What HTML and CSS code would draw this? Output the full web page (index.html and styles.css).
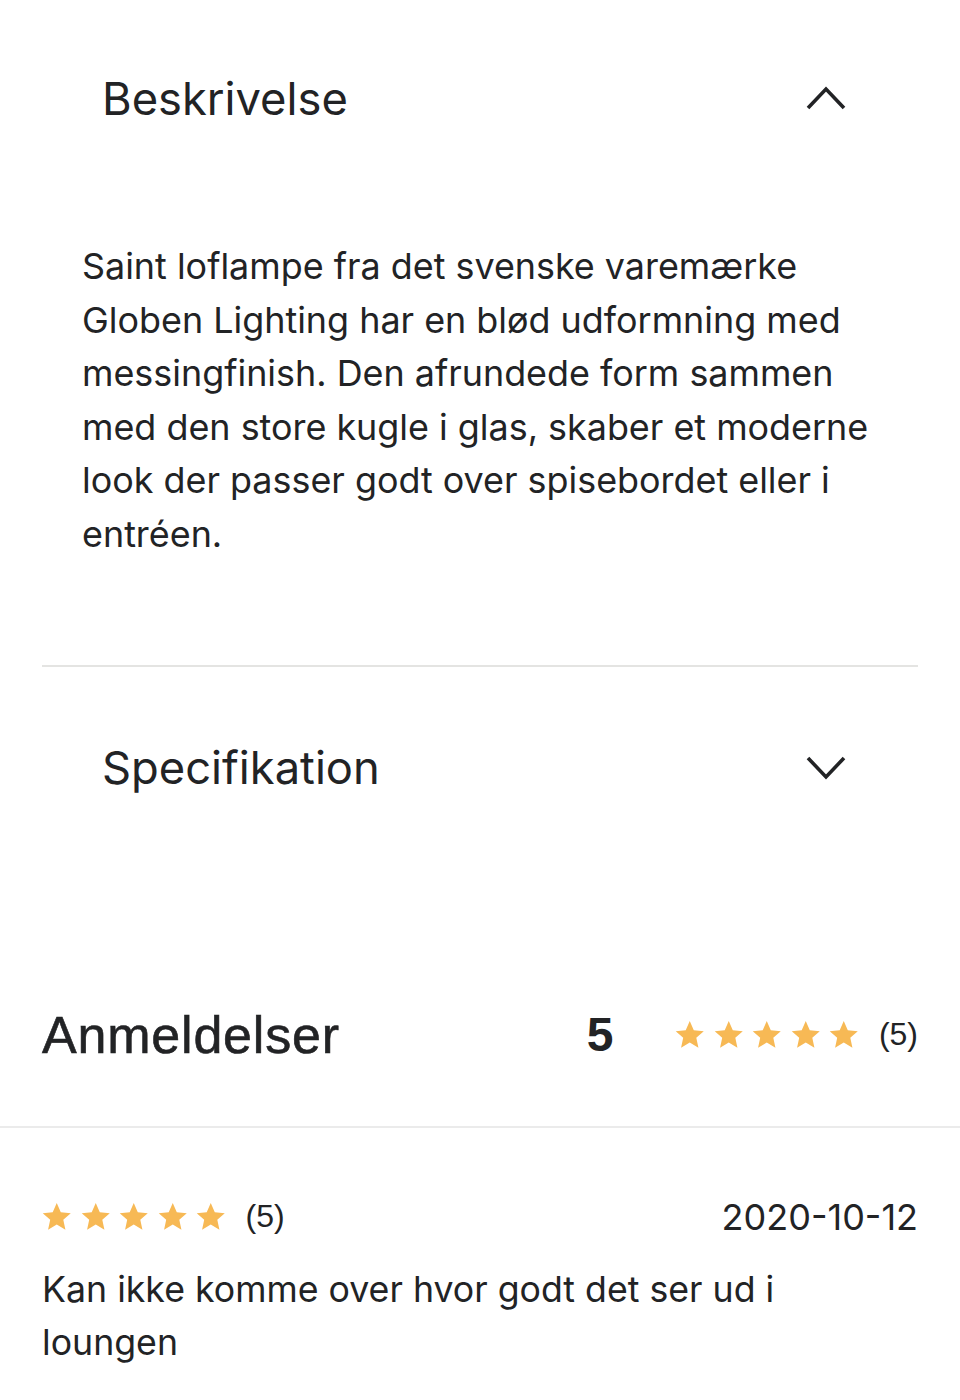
FILE: index.html
```html
<!DOCTYPE html>
<html lang="da">
<head>
<meta charset="utf-8">
<title>Produkt</title>
<link rel="stylesheet" href="styles.css">
</head>
<body>
<div class="page">
  <section class="accordion">
    <div class="acc-item acc-first">
      <div class="acc-header">
        <h2 class="acc-title">Beskrivelse</h2>
        <svg class="chevron" viewBox="0 0 40 24" aria-hidden="true"><polyline points="2,22 20,3 38,22" /></svg>
      </div>
      <p class="acc-body">Saint loflampe fra det svenske varemærke Globen Lighting har en blød udformning med messingfinish. Den afrundede form sammen med den store kugle i glas, skaber et moderne look der passer godt over spisebordet eller i entréen.</p>
    </div>
    <div class="acc-item acc-next">
      <div class="acc-header">
        <h2 class="acc-title">Specifikation</h2>
        <svg class="chevron" viewBox="0 0 40 24" aria-hidden="true"><polyline points="2,2 20,21 38,2" /></svg>
      </div>
    </div>
  </section>

  <section class="reviews">
    <div class="reviews-head">
      <h2 class="reviews-title">Anmeldelser</h2>
      <div class="reviews-score">
        <span class="score">5</span>
        <span class="stars">
          <svg class="star" viewBox="0 0 24 24"><path d="M12 0.8L15.29 8.27L23.41 9.09L17.33 14.53L19.05 22.51L12 18.4L4.95 22.51L6.67 14.53L0.59 9.09L8.71 8.27Z"/></svg>
          <svg class="star" viewBox="0 0 24 24"><path d="M12 0.8L15.29 8.27L23.41 9.09L17.33 14.53L19.05 22.51L12 18.4L4.95 22.51L6.67 14.53L0.59 9.09L8.71 8.27Z"/></svg>
          <svg class="star" viewBox="0 0 24 24"><path d="M12 0.8L15.29 8.27L23.41 9.09L17.33 14.53L19.05 22.51L12 18.4L4.95 22.51L6.67 14.53L0.59 9.09L8.71 8.27Z"/></svg>
          <svg class="star" viewBox="0 0 24 24"><path d="M12 0.8L15.29 8.27L23.41 9.09L17.33 14.53L19.05 22.51L12 18.4L4.95 22.51L6.67 14.53L0.59 9.09L8.71 8.27Z"/></svg>
          <svg class="star" viewBox="0 0 24 24"><path d="M12 0.8L15.29 8.27L23.41 9.09L17.33 14.53L19.05 22.51L12 18.4L4.95 22.51L6.67 14.53L0.59 9.09L8.71 8.27Z"/></svg>
        </span>
        <span class="count">(5)</span>
      </div>
    </div>
    <div class="review">
      <div class="review-meta">
        <div class="review-rating">
          <span class="stars">
            <svg class="star" viewBox="0 0 24 24"><path d="M12 0.8L15.29 8.27L23.41 9.09L17.33 14.53L19.05 22.51L12 18.4L4.95 22.51L6.67 14.53L0.59 9.09L8.71 8.27Z"/></svg>
            <svg class="star" viewBox="0 0 24 24"><path d="M12 0.8L15.29 8.27L23.41 9.09L17.33 14.53L19.05 22.51L12 18.4L4.95 22.51L6.67 14.53L0.59 9.09L8.71 8.27Z"/></svg>
            <svg class="star" viewBox="0 0 24 24"><path d="M12 0.8L15.29 8.27L23.41 9.09L17.33 14.53L19.05 22.51L12 18.4L4.95 22.51L6.67 14.53L0.59 9.09L8.71 8.27Z"/></svg>
            <svg class="star" viewBox="0 0 24 24"><path d="M12 0.8L15.29 8.27L23.41 9.09L17.33 14.53L19.05 22.51L12 18.4L4.95 22.51L6.67 14.53L0.59 9.09L8.71 8.27Z"/></svg>
            <svg class="star" viewBox="0 0 24 24"><path d="M12 0.8L15.29 8.27L23.41 9.09L17.33 14.53L19.05 22.51L12 18.4L4.95 22.51L6.67 14.53L0.59 9.09L8.71 8.27Z"/></svg>
          </span>
          <span class="count">(5)</span>
        </div>
        <span class="review-date">2020-10-12</span>
      </div>
      <p class="review-text">Kan ikke komme over hvor godt det ser ud i loungen</p>
    </div>
  </section>
</div>
</body>
</html>
```

FILE: styles.css
```css
* { box-sizing: border-box; }

html, body {
  margin: 0;
  padding: 0;
  background: #ffffff;
}

body {
  font-family: Inter, "Noto Sans", sans-serif;
  color: #222325;
}

.page {
  width: 960px;
}

.accordion {
  padding: 0 42px;
}

.acc-first {
  padding-top: 40px;
  padding-bottom: 103px;
  border-bottom: 2px solid #e4e4e2;
}

.acc-next {
  padding-top: 43px;
}

.acc-header {
  height: 116px;
  display: flex;
  align-items: center;
  justify-content: space-between;
  padding: 0 72px 0 60px;
}

.acc-title {
  margin: 0;
  font-size: 45.3px;
  font-weight: 400;
  letter-spacing: 0;
}

.chevron {
  width: 40px;
  height: 24px;
  fill: none;
  stroke: #222325;
  stroke-width: 3.6;
  stroke-linecap: butt;
  stroke-linejoin: miter;
}

.acc-body {
  margin: 84px 0 0;
  padding: 0 40px;
  font-size: 35.9px;
  line-height: 53.6px;
}

.reviews {
  margin-top: 164px;
}

.reviews-head {
  height: 90px;
  margin: 0 42px;
  display: flex;
  align-items: center;
  justify-content: space-between;
}

.reviews-title {
  margin: 0;
  font-family: "Liberation Sans", Arial, sans-serif;
  font-size: 52px;
  font-weight: 400;
  letter-spacing: 0.8px;
  -webkit-text-stroke: 0.6px #222325;
}

.reviews-score {
  display: flex;
  align-items: center;
}

.score {
  font-family: "Liberation Sans", Arial, sans-serif;
  font-weight: 700;
  font-size: 48px;
  margin-right: 62px;
}

.stars {
  display: flex;
  gap: 9px;
}

.star {
  width: 29.5px;
  height: 29.5px;
  fill: #f7b955;
}

.count {
  font-family: "Liberation Sans", Arial, sans-serif;
  font-size: 32px;
  margin-left: 20px;
}

.review {
  border-top: 2px solid #ebebeb;
  margin-top: 46px;
  padding: 64px 42px 0;
}

.review-meta {
  height: 50px;
  display: flex;
  align-items: center;
  justify-content: space-between;
}

.review-rating {
  display: flex;
  align-items: center;
}

.review-date {
  font-size: 36px;
}

.review-text {
  margin: 21px 0 0;
  font-size: 35.7px;
  line-height: 53.6px;
}
```
